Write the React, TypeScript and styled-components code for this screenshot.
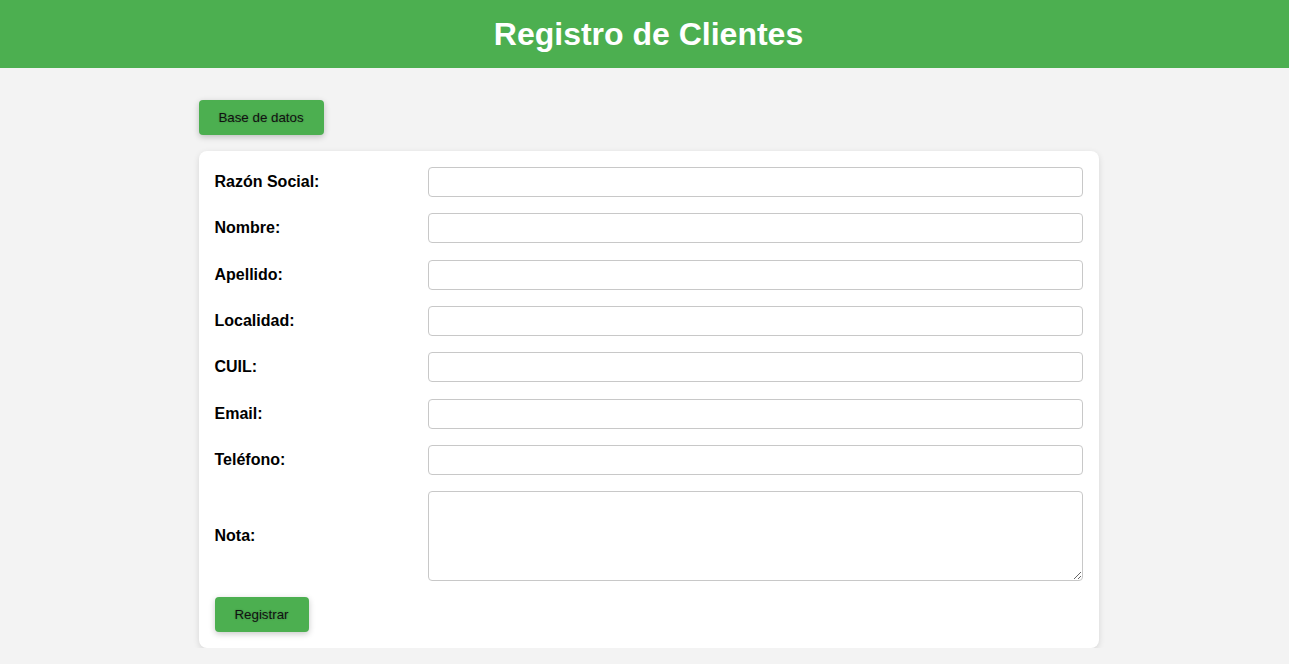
import React from "react";
import styled, { createGlobalStyle } from "styled-components";

const Global = createGlobalStyle`
  html, body { margin: 0; padding: 0; }
  body {
    background: #f3f3f3;
    font-family: "Liberation Sans", Arial, sans-serif;
    color: #000;
  }
  * { box-sizing: border-box; }
`;

const Header = styled.header`
  background: #4caf50;
  height: 68px;
  padding-left: 8px;
  display: flex;
  align-items: center;
  justify-content: center;
`;

const Title = styled.h1`
  margin: 0;
  color: #fff;
  font-size: 32px;
  font-weight: bold;
  font-family: "Liberation Sans", Arial, sans-serif;
`;

const Page = styled.div`
  padding-left: 8px;
`;

const Main = styled.main`
  width: 900px;
  margin: 32px auto 0;
  display: flex;
  flex-direction: column;
  align-items: flex-start;
  gap: 16px;
`;

const GreenButton = styled.button<{ $w: number }>`
  width: ${(p) => p.$w}px;
  height: 35px;
  background: #4caf50;
  border: none;
  border-radius: 4px;
  color: #111;
  font-family: "Liberation Sans", Arial, sans-serif;
  font-size: 13.33px;
  text-shadow: 0 0 2px rgba(0, 0, 0, 0.25);
  box-shadow: 0 2px 6px rgba(0, 0, 0, 0.22);
  cursor: pointer;
  padding: 0;
`;

const Card = styled.form`
  width: 900px;
  background: #fff;
  border-radius: 8px;
  box-shadow: 0 2px 6px rgba(0, 0, 0, 0.12);
  padding: 16px;
  display: flex;
  flex-direction: column;
  gap: 16.33px;
`;

const Row = styled.div`
  display: grid;
  grid-template-columns: 213px 1fr;
  align-items: center;
`;

const Label = styled.label`
  font-size: 16px;
  font-weight: bold;
  font-family: "Liberation Sans", Arial, sans-serif;
`;

const Input = styled.input`
  height: 30px;
  width: 100%;
  border: 1px solid #c8c8c8;
  border-radius: 4px;
  background: #fff;
  padding: 4px 8px;
  font-size: 14px;
`;

const TextArea = styled.textarea`
  height: 90px;
  width: 100%;
  border: 1px solid #c8c8c8;
  border-radius: 4px;
  background: #fff;
  padding: 4px 8px;
  font-size: 14px;
  display: block;
`;

const Actions = styled.div`
  margin-top: -1px;
  display: flex;
`;

const fields = ["Razón Social:", "Nombre:", "Apellido:", "Localidad:", "CUIL:", "Email:", "Teléfono:"];

export default function App() {
  return (
    <>
      <Global />
      <Header>
        <Title>Registro de Clientes</Title>
      </Header>
      <Page>
        <Main>
          <GreenButton $w={125} type="button">Base de datos</GreenButton>
          <Card onSubmit={(e) => e.preventDefault()}>
            {fields.map((f) => (
              <Row key={f}>
                <Label>{f}</Label>
                <Input type="text" />
              </Row>
            ))}
            <Row>
              <Label>Nota:</Label>
              <TextArea />
            </Row>
            <Actions>
              <GreenButton $w={94} type="submit">Registrar</GreenButton>
            </Actions>
          </Card>
        </Main>
      </Page>
    </>
  );
}
